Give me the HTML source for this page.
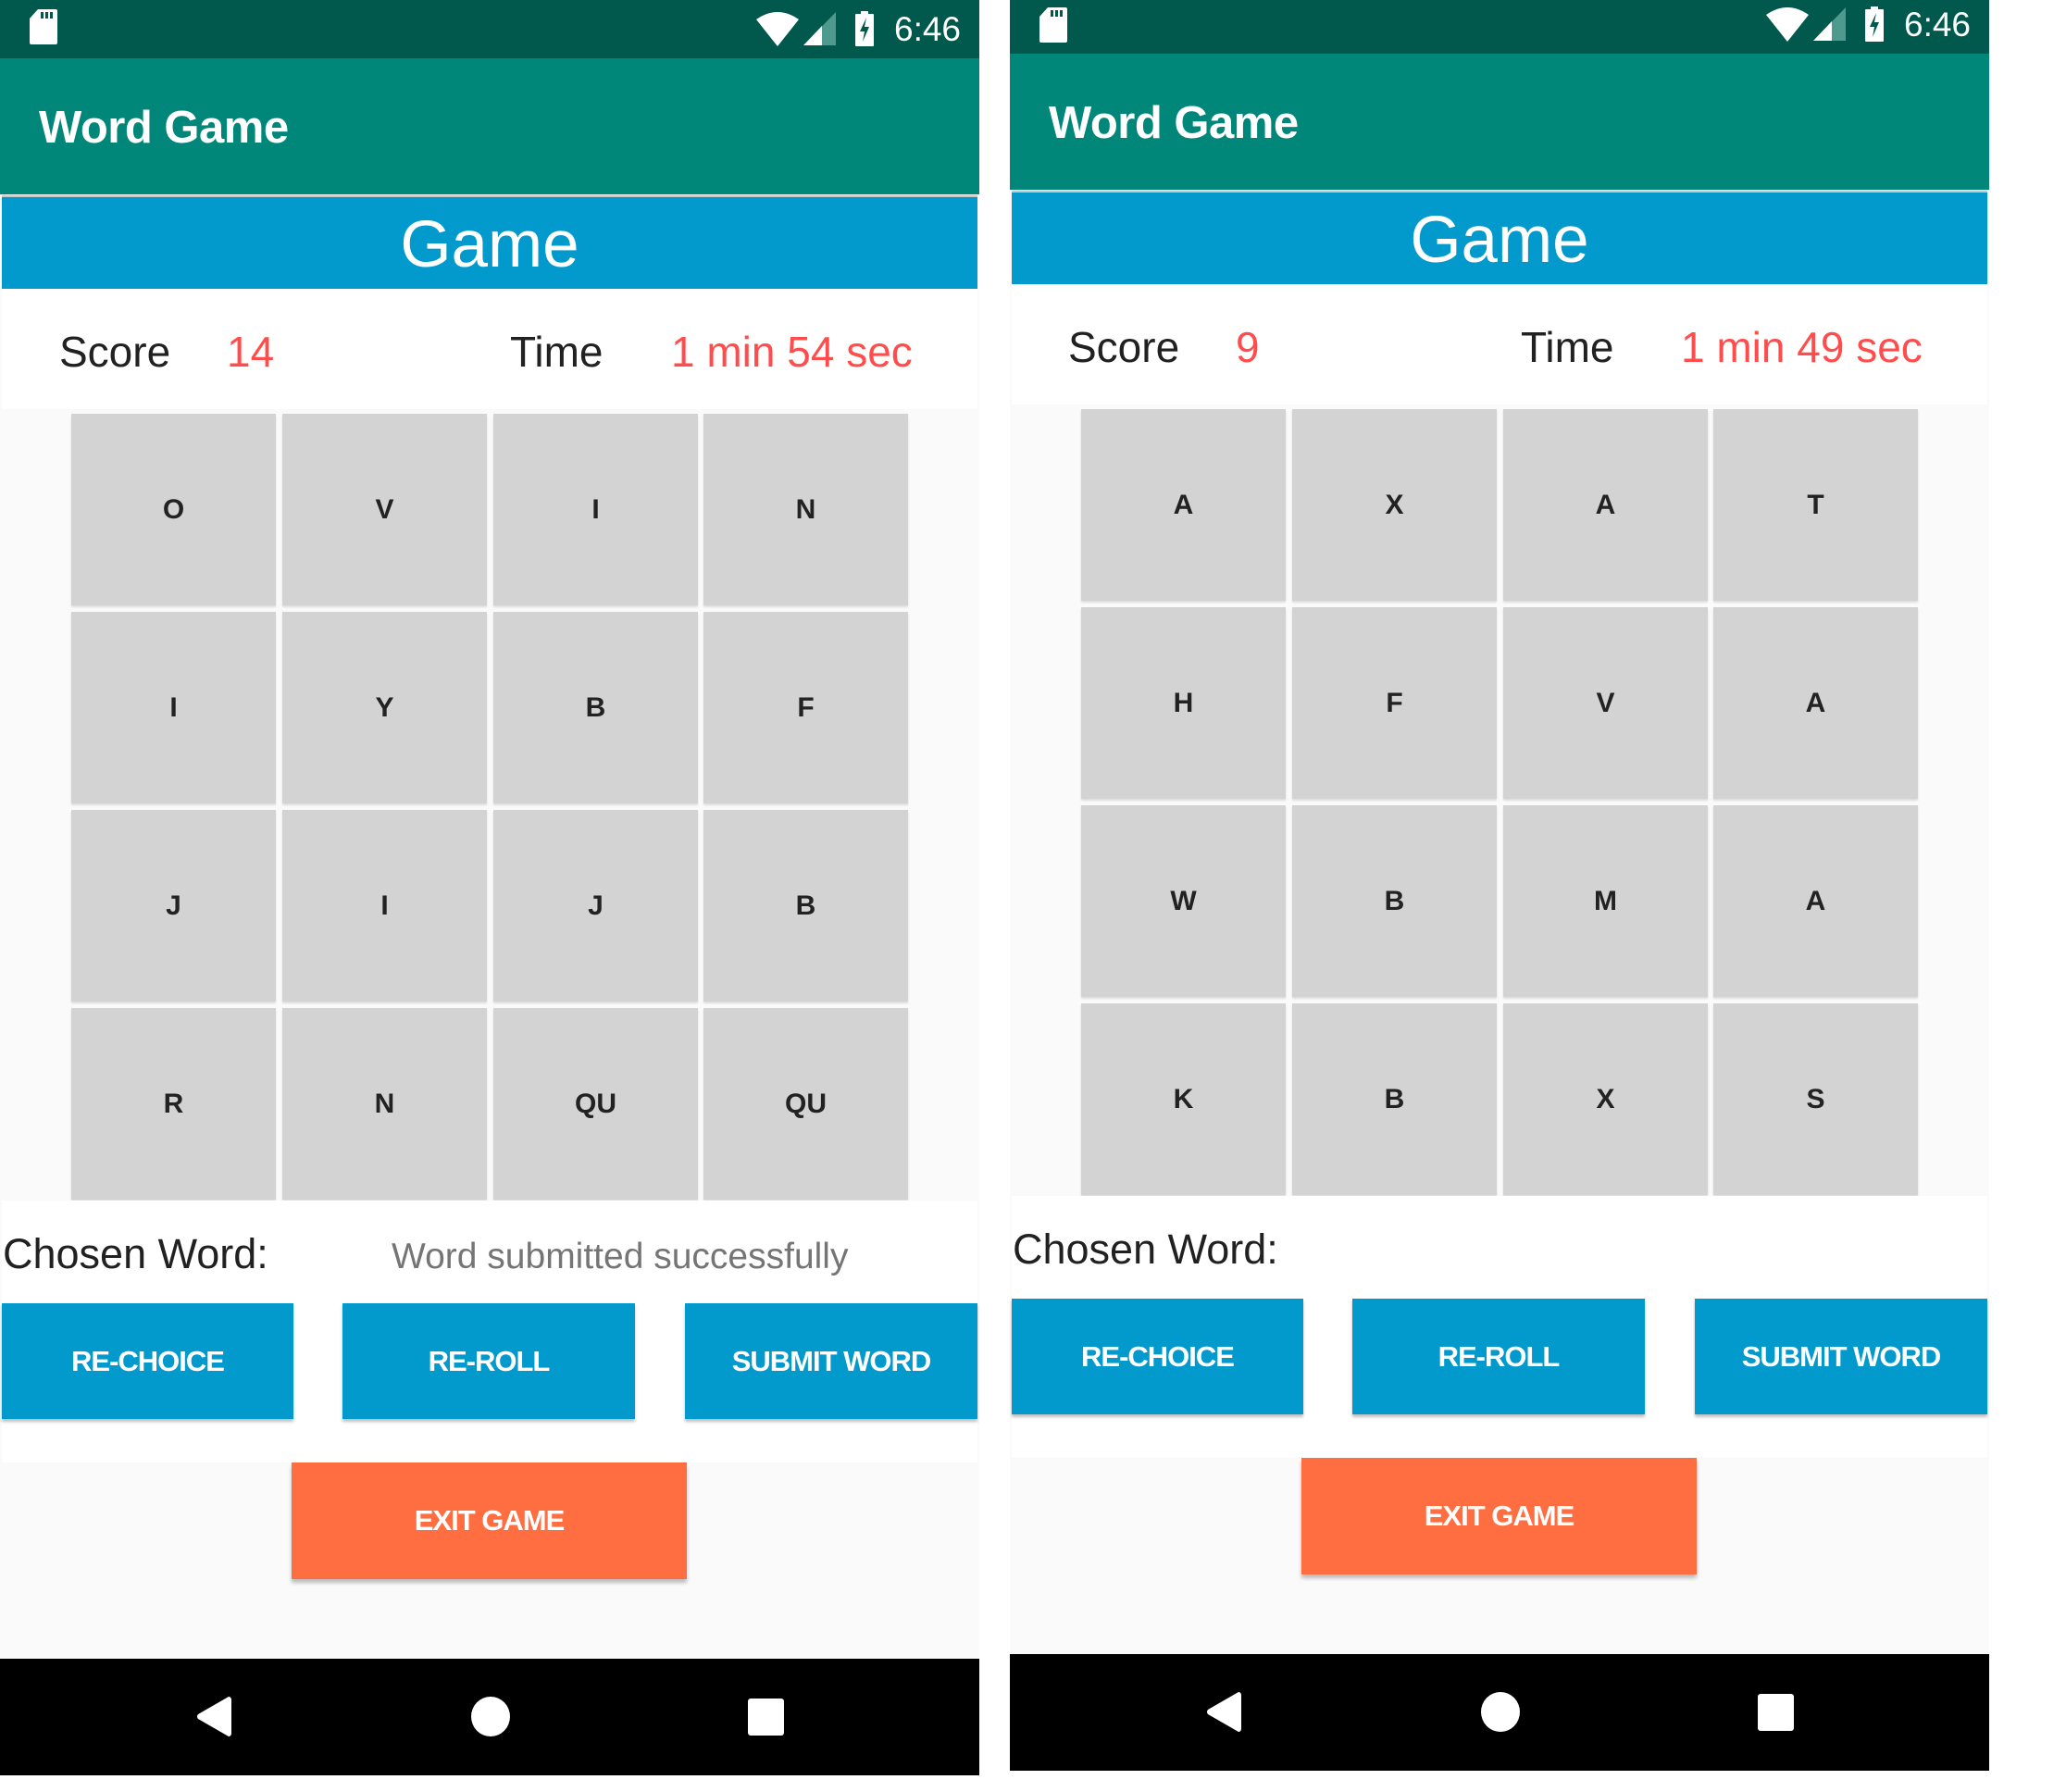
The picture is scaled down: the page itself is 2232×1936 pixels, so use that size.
<!DOCTYPE html>
<html><head><meta charset="utf-8">
<style>
*{margin:0;padding:0;box-sizing:border-box}
body{width:2232px;height:1936px;background:#fff;position:relative;overflow:hidden;font-family:"Liberation Sans",Arial,sans-serif}
.p{position:absolute;width:1058px;height:1918px;background:#fafafa}
.a{position:absolute}
.sb{left:0;top:0;width:1058px;height:63px;background:#00594c}
.ab{left:0;top:63px;width:1058px;height:147px;background:#00877a}
.title{left:42px;top:108px;font-size:49px;color:#fff;font-weight:bold;line-height:60px;letter-spacing:-0.5px}
.gh{left:2px;top:211px;width:1054px;height:101px;background:#0299cc;border-top:2px solid #c8c8c8;color:#fff;font-size:71px;text-align:center;line-height:104px}
.sr{left:2px;top:312px;width:1054px;height:130px;background:#fff}
.t{font-size:46px;line-height:56px;top:352px;color:#212121}
.r{color:#ff4d4d}
.tile{position:absolute;width:221px;height:207px;background:#d3d3d3;box-shadow:0 2px 2px rgba(0,0,0,.12);font-size:30px;font-weight:bold;color:#222;text-align:center;line-height:207px}
.cw{left:2px;top:1297px;width:1054px;height:283px;background:#fff}
.btn{position:absolute;top:1408px;height:125px;background:#0299cc;color:#fff;font-weight:bold;font-size:31px;text-align:center;line-height:125px;box-shadow:0 3px 3px rgba(0,0,0,.25);letter-spacing:-1px}
.ex{left:315px;top:1580px;width:427px;height:126px;background:#ff6e40;color:#fff;font-weight:bold;font-size:31px;text-align:center;line-height:126px;box-shadow:0 4px 4px rgba(0,0,0,.25);letter-spacing:-1px}
.nav{left:0;top:1792px;width:1058px;height:126px;background:#000}
.tm{color:#fff;font-size:37px;top:10px;left:966px;line-height:44px}
</style></head><body>

<div class="p" style="left:0;top:0">
<div class="a sb"></div>
<svg class="a" style="left:31px;top:10px" width="32" height="38" viewBox="0 0 32 38"><path d="M10 0H29Q31 0 31 2V36Q31 38 29 38H3Q1 38 1 36V10Z" fill="#fff"/><rect x="13" y="3" width="3" height="7" fill="#00594c"/><rect x="18" y="3" width="3" height="7" fill="#00594c"/><rect x="23" y="3" width="3" height="7" fill="#00594c"/></svg>
<svg class="a" style="left:817px;top:13px" width="46" height="37" viewBox="0 0 46 37"><path d="M0 8Q23-8 46 8L23 37Z" fill="#fff"/></svg>
<svg class="a" style="left:868px;top:13px" width="35" height="36" viewBox="0 0 35 36"><path d="M35 0V36H0Z" fill="#4f9a8e"/><path d="M20 15V36H0Z" fill="#fff"/></svg>
<svg class="a" style="left:924px;top:12px" width="20" height="38" viewBox="0 0 20 38"><rect x="6" y="0" width="8" height="4" fill="#fff"/><rect x="0" y="3" width="20" height="35" rx="1" fill="#fff"/><path d="M12 7L5 22H10L8 33L15 17H10Z" fill="#00594c"/></svg>
<div class="a tm">6:46</div>
<div class="a ab"></div>
<div class="a title">Word Game</div>
<div class="a gh">Game</div>
<div class="a sr"></div>
<div class="a t" style="left:64px">Score</div>
<div class="a t r" style="left:245px">14</div>
<div class="a t" style="left:551px">Time</div>
<div class="a t r" style="left:725px">1 min 54 sec</div>
<div class="tile" style="left:77px;top:447px">O</div><div class="tile" style="left:305px;top:447px">V</div><div class="tile" style="left:533px;top:447px">I</div><div class="tile" style="left:760px;top:447px">N</div>
<div class="tile" style="left:77px;top:661px">I</div><div class="tile" style="left:305px;top:661px">Y</div><div class="tile" style="left:533px;top:661px">B</div><div class="tile" style="left:760px;top:661px">F</div>
<div class="tile" style="left:77px;top:875px">J</div><div class="tile" style="left:305px;top:875px">I</div><div class="tile" style="left:533px;top:875px">J</div><div class="tile" style="left:760px;top:875px">B</div>
<div class="tile" style="left:77px;top:1089px">R</div><div class="tile" style="left:305px;top:1089px">N</div><div class="tile" style="left:533px;top:1089px">QU</div><div class="tile" style="left:760px;top:1089px">QU</div>
<div class="a cw"></div>
<div class="a" style="left:3px;top:1327px;font-size:45px;line-height:56px;color:#212121">Chosen Word:</div>
<div class="a" style="left:423px;top:1334px;font-size:39px;line-height:48px;color:#757575">Word submitted successfully</div>
<div class="btn" style="left:2px;width:315px">RE-CHOICE</div>
<div class="btn" style="left:370px;width:316px">RE-ROLL</div>
<div class="btn" style="left:740px;width:316px">SUBMIT WORD</div>
<div class="a ex">EXIT GAME</div>
<div class="a nav"></div>
<svg class="a" style="left:212px;top:1833px" width="38" height="43" viewBox="0 0 38 43"><path d="M35 0Q38 0 38 4V39Q38 43 35 43L2 24Q0 21.5 2 19Z" fill="#fff"/></svg>
<div class="a" style="left:509px;top:1833px;width:42px;height:43px;border-radius:50%;background:#fff"></div>
<div class="a" style="left:808px;top:1835px;width:39px;height:40px;border-radius:3px;background:#fff"></div>
</div>

<div class="p" style="left:1091px;top:-5px">
<div class="a sb" style="top:5px;height:58px"></div>
<svg class="a" style="left:31px;top:13px" width="32" height="38" viewBox="0 0 32 38"><path d="M10 0H29Q31 0 31 2V36Q31 38 29 38H3Q1 38 1 36V10Z" fill="#fff"/><rect x="13" y="3" width="3" height="7" fill="#00594c"/><rect x="18" y="3" width="3" height="7" fill="#00594c"/><rect x="23" y="3" width="3" height="7" fill="#00594c"/></svg>
<svg class="a" style="left:817px;top:13px" width="46" height="37" viewBox="0 0 46 37"><path d="M0 8Q23-8 46 8L23 37Z" fill="#fff"/></svg>
<svg class="a" style="left:868px;top:13px" width="35" height="36" viewBox="0 0 35 36"><path d="M35 0V36H0Z" fill="#4f9a8e"/><path d="M20 15V36H0Z" fill="#fff"/></svg>
<svg class="a" style="left:924px;top:12px" width="20" height="38" viewBox="0 0 20 38"><rect x="6" y="0" width="8" height="4" fill="#fff"/><rect x="0" y="3" width="20" height="35" rx="1" fill="#fff"/><path d="M12 7L5 22H10L8 33L15 17H10Z" fill="#00594c"/></svg>
<div class="a tm">6:46</div>
<div class="a ab"></div>
<div class="a title">Word Game</div>
<div class="a gh">Game</div>
<div class="a sr"></div>
<div class="a t" style="left:63px">Score</div>
<div class="a t r" style="left:244px">9</div>
<div class="a t" style="left:552px">Time</div>
<div class="a t r" style="left:725px">1 min 49 sec</div>
<div class="tile" style="left:77px;top:447px">A</div><div class="tile" style="left:305px;top:447px">X</div><div class="tile" style="left:533px;top:447px">A</div><div class="tile" style="left:760px;top:447px">T</div>
<div class="tile" style="left:77px;top:661px">H</div><div class="tile" style="left:305px;top:661px">F</div><div class="tile" style="left:533px;top:661px">V</div><div class="tile" style="left:760px;top:661px">A</div>
<div class="tile" style="left:77px;top:875px">W</div><div class="tile" style="left:305px;top:875px">B</div><div class="tile" style="left:533px;top:875px">M</div><div class="tile" style="left:760px;top:875px">A</div>
<div class="tile" style="left:77px;top:1089px">K</div><div class="tile" style="left:305px;top:1089px">B</div><div class="tile" style="left:533px;top:1089px">X</div><div class="tile" style="left:760px;top:1089px">S</div>
<div class="a cw"></div>
<div class="a" style="left:3px;top:1327px;font-size:45px;line-height:56px;color:#212121">Chosen Word:</div>
<div class="btn" style="left:2px;width:315px">RE-CHOICE</div>
<div class="btn" style="left:370px;width:316px">RE-ROLL</div>
<div class="btn" style="left:740px;width:316px">SUBMIT WORD</div>
<div class="a ex">EXIT GAME</div>
<div class="a nav"></div>
<svg class="a" style="left:212px;top:1833px" width="38" height="43" viewBox="0 0 38 43"><path d="M35 0Q38 0 38 4V39Q38 43 35 43L2 24Q0 21.5 2 19Z" fill="#fff"/></svg>
<div class="a" style="left:509px;top:1833px;width:42px;height:43px;border-radius:50%;background:#fff"></div>
<div class="a" style="left:808px;top:1835px;width:39px;height:40px;border-radius:3px;background:#fff"></div>
</div>
</body></html>
